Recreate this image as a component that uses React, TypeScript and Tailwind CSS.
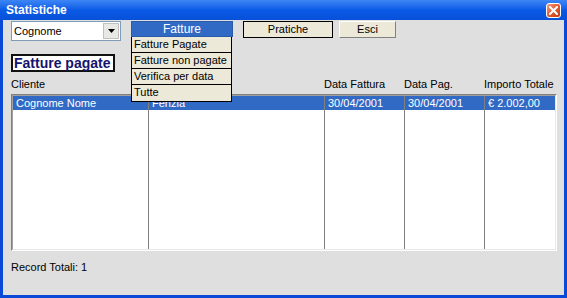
import React from 'react'

const menuItems = ['Fatture Pagate', 'Fatture non pagate', 'Verifica per data', 'Tutte']

function CloseButton() {
  return (
    <div className="w-[15px] h-[15px] rounded-[3px] border border-white bg-gradient-to-br from-[#f39a7a] via-[#e35a2e] to-[#c33b12] flex items-center justify-center">
      <svg width="9" height="9" viewBox="0 0 9 9">
        <path d="M1 1 L8 8 M8 1 L1 8" stroke="white" strokeWidth="2" strokeLinecap="square" />
      </svg>
    </div>
  )
}

function Cell({ w, children, first }: { w: string; children?: React.ReactNode; first?: boolean }) {
  return (
    <div className={`${w} flex flex-col ${first ? '' : 'border-l border-[#808080]'}`}>
      <div className="h-[14px] bg-[#316ac5] text-white pl-[3px] leading-[14px] whitespace-nowrap overflow-hidden">
        {children}
      </div>
      <div className="flex-1 bg-white" />
    </div>
  )
}

export default function App() {
  return (
    <div className="w-[567px] h-[298px] flex flex-col bg-[#0a48d8] px-[3px] pb-[3px] font-['Liberation_Sans',Arial,sans-serif] text-[11px] text-black">
      {/* barra del titolo */}
      <div className="h-[20px] -mx-[3px] px-[6px] flex items-center justify-between bg-gradient-to-b from-[#3d86f5] via-[#0a5ae6] to-[#0850d8]">
        <span className="text-white font-bold text-[12px] leading-none">Statistiche</span>
        <CloseButton />
      </div>

      <div className="flex-1 bg-[#dfdfdf] pl-[8px] pr-[7px] pt-[1px] flex flex-col">
        <div className="flex items-start h-[20px]">
          <div className="w-[110px] h-[20px] bg-white border border-[#7f9db9] flex items-center">
            <span className="flex-1 pl-[2px] leading-none">Cognome</span>
            <div className="w-[16px] h-[16px] mr-[1px] bg-[#e8e8e4] border border-[#c0c0c0] flex items-center justify-center">
              <svg width="7" height="4" viewBox="0 0 7 4">
                <path d="M0 0 H7 L3.5 4 Z" fill="black" />
              </svg>
            </div>
          </div>

          <div className="relative ml-[10px] w-[102px]">
            <div className="h-[16px] bg-[#316ac5] border border-[#2a5aa8] text-white text-[12px] leading-[14px] text-center">
              Fatture
            </div>
            <div className="absolute top-full left-0 w-[101px] border border-black border-t-0 bg-[#ece9d8] z-10">
              {menuItems.map((m, i) => (
                <div
                  key={m}
                  className={`h-[16px] pl-[2px] leading-[15px] ${i < menuItems.length - 1 ? 'border-b border-black' : ''}`}
                >
                  {m}
                </div>
              ))}
            </div>
          </div>

          <div className="ml-[10px] w-[90px] h-[17px] bg-[#ece9d8] border border-black text-center leading-[15px]">
            Pratiche
          </div>
          <div className="ml-[6px] w-[57px] h-[17px] bg-[#ece9d8] border border-t-white border-l-white border-r-[#808080] border-b-[#808080] text-center leading-[15px]">
            Esci
          </div>
        </div>

        <div className="mt-[13px] w-[104px] h-[18px] bg-white border-2 border-[#111] text-[#14146e] font-bold text-[14px] leading-[14px] pl-[1px] whitespace-nowrap">
          Fatture pagate
        </div>

        <div className="mt-[6px] h-[13px] flex leading-[13px]">
          <span className="w-[313px]">Cliente</span>
          <span className="w-[80px]">Data Fattura</span>
          <span className="w-[80px]">Data Pag.</span>
          <span>Importo Totale</span>
        </div>

        <div className="mt-[3px] h-[157px] flex border-t border-l border-[#808080] border-r border-b border-r-white border-b-white">
          <div className="flex-1 flex border-t border-l border-[#a0a0a0] border-r border-b border-r-[#e8e8e8] border-b-[#e8e8e8] bg-white">
            <Cell w="w-[135px]" first>Cognome Nome</Cell>
            <Cell w="w-[176px]">Fenzia</Cell>
            <Cell w="w-[80px]">30/04/2001</Cell>
            <Cell w="w-[80px]">30/04/2001</Cell>
            <Cell w="flex-1">€ 2.002,00</Cell>
          </div>
        </div>

        <div className="mt-[10px] leading-[13px]">Record Totali: 1</div>
      </div>
    </div>
  )
}
